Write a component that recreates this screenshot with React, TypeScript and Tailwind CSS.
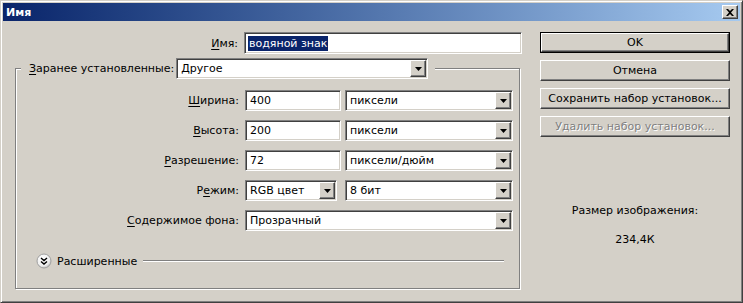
import type { ReactNode } from "react"

const sunken =
  "border border-t-[#808080] border-l-[#808080] border-b-white border-r-white shadow-[inset_1px_1px_0_#404040,inset_-1px_-1px_0_#d4d0c8]"
const raised =
  "border border-t-white border-l-white border-b-[#404040] border-r-[#404040] shadow-[inset_-1px_-1px_0_#808080]"

function Label({ children }: { children: ReactNode }) {
  return <span className="w-[229px] shrink-0 pr-[6px] text-right">{children}</span>
}

function Field({ value, className = "" }: { value: string; className?: string }) {
  return (
    <div className={`flex h-[21px] items-center bg-white pl-[4px] ${sunken} ${className}`}>
      {value}
    </div>
  )
}

function Arrow() {
  return (
    <div className={`flex h-full w-[16px] shrink-0 items-center justify-center bg-[#d4d0c8] ${raised}`}>
      <svg width="7" height="4" viewBox="0 0 7 4">
        <path d="M0 0h7L3.5 4z" fill="#000" />
      </svg>
    </div>
  )
}

function Select({ value, className = "" }: { value: string; className?: string }) {
  return (
    <div className={`flex h-[21px] items-center bg-white p-[1px] ${sunken} ${className}`}>
      <span className="flex-1 pl-[3px]">{value}</span>
      <Arrow />
    </div>
  )
}

function Button({
  children,
  isDefault = false,
  disabled = false,
}: {
  children: ReactNode
  isDefault?: boolean
  disabled?: boolean
}) {
  const textClass = disabled ? "text-[#808080] [text-shadow:1px_1px_0_#fff]" : "text-black"
  if (isDefault) {
    return (
      <div className="h-[21px] border border-black">
        <div className={`flex h-full items-center justify-center bg-[#d4d0c8] ${raised} ${textClass}`}>
          {children}
        </div>
      </div>
    )
  }
  return (
    <div className={`flex h-[21px] items-center justify-center bg-[#d4d0c8] ${raised} ${textClass}`}>
      {children}
    </div>
  )
}

function u(letter: string) {
  return <span className="underline underline-offset-2">{letter}</span>
}

export default function App() {
  return (
    <div
      className="h-[303px] w-[743px] overflow-hidden border border-t-[#d4d0c8] border-l-[#d4d0c8] border-r-[#404040] border-b-[#404040] bg-[#d4d0c8] p-[2px] text-[11px] leading-none text-black shadow-[inset_1px_1px_0_#fff,inset_-1px_-1px_0_#808080]"
      style={{ fontFamily: '"DejaVu Sans", Tahoma, sans-serif' }}
    >
      {/* Title bar */}
      <div className="flex h-[18px] items-center justify-between bg-gradient-to-r from-[#0a246a] to-[#a6caf0] pl-[3px] pr-[2px]">
        <span className="font-bold text-white">Имя</span>
        <div className={`flex h-[14px] w-[16px] items-center justify-center bg-[#d4d0c8] ${raised}`}>
          <svg width="8" height="7" viewBox="0 0 8 7">
            <path d="M0 0h2l2 2 2-2h2L5 3.5 8 7H6L4 5 2 7H0l3-3.5z" fill="#000" />
          </svg>
        </div>
      </div>

      {/* Body */}
      <div className="flex pl-[12px] pt-[11px]">
        <div className="w-[507px] shrink-0">
          <div className="flex items-center">
            <Label>{u("И")}мя:</Label>
            <div className={`flex h-[22px] w-[279px] items-center bg-white pl-[3px] ${sunken}`}>
              <span className="bg-[#0a246a] px-[1px] py-[2px] text-white">водяной знак</span>
            </div>
          </div>

          <fieldset className="mt-[4px] h-[231px] w-[505px] border border-[#808080] shadow-[1px_1px_0_#fff,inset_1px_1px_0_#fff]">
            <legend className="ml-[5px] flex items-center bg-[#d4d0c8] pl-[8px] pr-[7px]">
              <span className="pr-[2px]">{u("З")}аранее установленные:</span>
              <Select value="Другое" className="w-[252px]" />
            </legend>

            <div className="mt-[11px] flex flex-col gap-[9px]">
              <div className="flex items-center">
                <Label>{u("Ш")}ирина:</Label>
                <Field value="400" className="w-[96px]" />
                <Select value="пиксели" className="ml-[4px] w-[168px]" />
              </div>
              <div className="flex items-center">
                <Label>{u("В")}ысота:</Label>
                <Field value="200" className="w-[96px]" />
                <Select value="пиксели" className="ml-[4px] w-[168px]" />
              </div>
              <div className="flex items-center">
                <Label>{u("Р")}азрешение:</Label>
                <Field value="72" className="w-[96px]" />
                <Select value="пиксели/дюйм" className="ml-[4px] w-[168px]" />
              </div>
              <div className="flex items-center">
                <Label>
                  Р{u("е")}жим:
                </Label>
                <Select value="RGB цвет" className="w-[92px]" />
                <Select value="8 бит" className="ml-[8px] w-[168px]" />
              </div>
              <div className="flex items-center">
                <Label>{u("С")}одержимое фона:</Label>
                <Select value="Прозрачный" className="w-[268px]" />
              </div>
            </div>

            {/* Advanced */}
            <div className="mt-[22px] flex items-center pl-[20px]">
              <svg width="16" height="16" viewBox="0 0 16 16">
                <defs>
                  <radialGradient id="g" cx="40%" cy="35%" r="70%">
                    <stop offset="0%" stopColor="#ffffff" />
                    <stop offset="70%" stopColor="#eeeeee" />
                    <stop offset="100%" stopColor="#b8b8b8" />
                  </radialGradient>
                </defs>
                <circle cx="8" cy="8" r="7" fill="url(#g)" stroke="#a0a0a0" />
                <path d="M5 5l3 2.5L11 5M5 8.5l3 2.5 3-2.5" fill="none" stroke="#000" strokeWidth="1.4" />
              </svg>
              <span className="ml-[5px]">Расширенные</span>
              <div className="ml-[6px] h-[2px] w-[361px] border-t border-t-[#808080] border-b border-b-white" />
            </div>
          </fieldset>
        </div>

        {/* Right column */}
        <div className="ml-[18px] flex w-[190px] flex-col">
          <div className="flex flex-col gap-[7px]">
            <Button isDefault>OK</Button>
            <Button>Отмена</Button>
            <Button>Сохранить набор установок...</Button>
            <Button disabled>Удалить набор установок...</Button>
          </div>
          <div className="mt-[68px] text-center">Размер изображения:</div>
          <div className="mt-[18px] text-center">234,4К</div>
        </div>
      </div>
    </div>
  )
}
